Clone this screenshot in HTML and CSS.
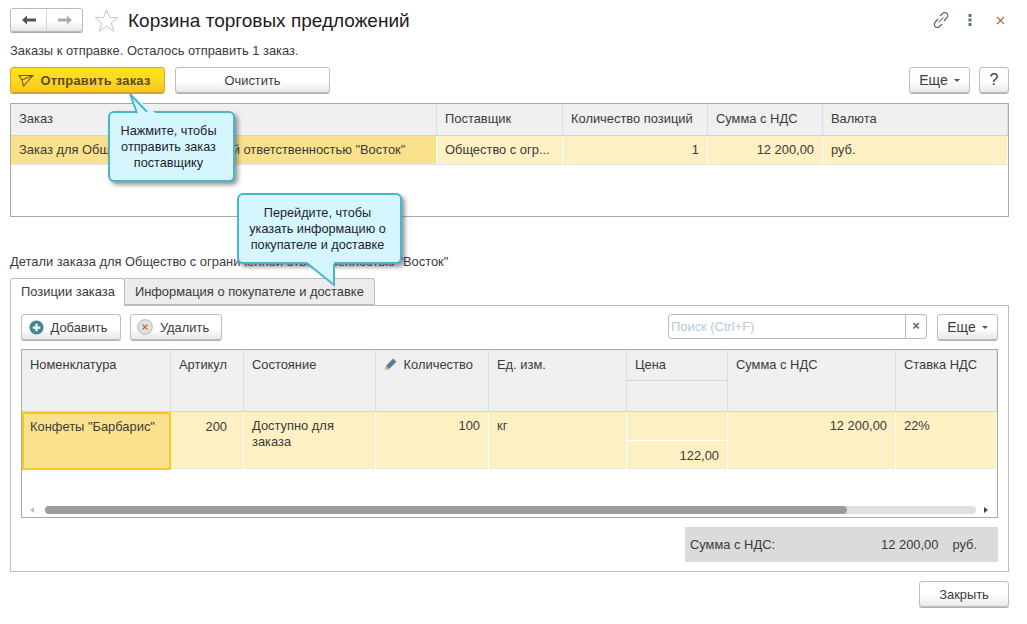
FILE: index.html
```html
<!DOCTYPE html>
<html lang="ru">
<head>
    <meta charset="UTF-8">
    <meta name="viewport" content="width=device-width, initial-scale=1.0">
    <link rel="stylesheet" href="styles.css">
    <title>Корзина торговых предложений</title>
</head>
<body>
    <!-- Form header -->
    <div class="form-header">
        <div class="nav-buttons">
            <span class="nav-button">
                <svg width="16" height="12" viewBox="0 0 16 12"><path d="M1 6l5-4.500v3h9v3H6v3z" fill="#555"/></svg>
            </span>
            <span class="nav-button">
                <svg width="16" height="12" viewBox="0 0 16 12"><path d="M15 6l-5-4.500v3H1v3h9v3z" fill="#aaa"/></svg>
            </span>
        </div>
        <svg class="star" width="25" height="25" viewBox="0 0 25 25"><path d="M12.500 1.500l3 8h8.500l-6.800 5.300 2.500 8.500-7.200-5-7.200 5 2.500-8.500L1 9.500h8.500z" fill="#fff" stroke="#c4c8c8"/></svg>
        <h1 class="form-title">Корзина торговых предложений</h1>
        <div class="window-icons">
            <svg class="icon-link" width="16" height="16" viewBox="0 0 16 16" fill="none" stroke="#4a6f8a" stroke-width="1.200"><path d="M7 4l2.500-2.500a2.800 2.800 0 0 1 4.500 4L11 9"/><path d="M9 12l-2.500 2.500a2.800 2.800 0 0 1-4.500-4L5 7"/><path d="M5.500 10.500l5-5" stroke="#c08a50"/></svg>
            <svg class="icon-dots" width="4" height="12" viewBox="0 0 4 12" fill="#5a7488"><rect x="0.500" y="0" width="3" height="3"/><rect x="0.500" y="4.500" width="3" height="3"/><rect x="0.500" y="9" width="3" height="3"/></svg>
            <svg class="icon-close" width="9" height="9" viewBox="0 0 9 9" stroke="#b5673f" stroke-width="1.100"><path d="M1 1l7 7M8 1l-7 7"/></svg>
        </div>
    </div>

    <p class="info-line">Заказы к отправке. Осталось отправить 1 заказ.</p>

    <!-- Main command bar -->
    <div class="command-bar">
        <button class="btn btn-send">
            <svg width="16" height="13" viewBox="0 0 16 13" fill="none" stroke="#7a5a10" stroke-width="1.100"><path d="M1 1.500h14L5.500 12 4 6zM4 6l11-4.500"/></svg>
            Отправить заказ
        </button>
        <button class="btn btn-clear">Очистить</button>
        <span class="spacer"></span>
        <button class="btn btn-more">Еще <i class="caret"></i></button>
        <button class="btn btn-help">?</button>
    </div>

    <!-- Orders table -->
    <div class="orders-table">
        <div class="orders-row orders-head">
            <div class="cell">Заказ</div>
            <div class="cell">Поставщик</div>
            <div class="cell">Количество позиций</div>
            <div class="cell">Сумма с НДС</div>
            <div class="cell">Валюта</div>
        </div>
        <div class="orders-row orders-body">
            <div class="cell cell-current">Заказ для Общество с ограниченной ответственностью "Восток"</div>
            <div class="cell">Общество с огр...</div>
            <div class="cell right">1</div>
            <div class="cell right">12 200,00</div>
            <div class="cell">руб.</div>
        </div>
    </div>

    <p class="details-line">Детали заказа для Общество с ограниченной ответственностью "Восток"</p>

    <!-- Tabs -->
    <div class="tabs">
        <div class="tab tab-active">Позиции заказа</div>
        <div class="tab">Информация о покупателе и доставке</div>
    </div>

    <div class="tab-panel">
        <div class="panel-toolbar">
            <button class="btn btn-add">
                <svg width="15" height="15" viewBox="0 0 16 16"><circle cx="8" cy="8" r="7.500" fill="#3d8a96"/><path d="M4 8h8M8 4v8" stroke="#fff" stroke-width="2.400"/></svg>
                Добавить
            </button>
            <button class="btn btn-delete">
                <svg width="16" height="16" viewBox="0 0 16 16"><circle cx="8" cy="8" r="7.300" fill="#e2e2e2" stroke="#b5b5b5"/><path d="M5.500 5.500l5 5M10.500 5.500l-5 5" stroke="#b86a4a" stroke-width="1.200"/></svg>
                Удалить
            </button>
            <span class="spacer"></span>
            <div class="search-box">
                <span class="search-text">Поиск (Ctrl+F)</span>
                <span class="search-clear">×</span>
            </div>
            <button class="btn btn-more">Еще <i class="caret"></i></button>
        </div>

        <!-- Order lines -->
        <div class="lines-table">
            <div class="lines-row lines-head">
                <div class="cell">Номенклатура</div>
                <div class="cell">Артикул</div>
                <div class="cell">Состояние</div>
                <div class="cell">
                    <svg class="pencil" width="14" height="14" viewBox="0 0 14 14"><path d="M1 13l1-4 7-7.500 3.500 3.200L5 12z" fill="#5d7f96"/><path d="M1 13l1-4 3 3z" fill="#e8c27a"/></svg>
                    Количество
                </div>
                <div class="cell">Ед. изм.</div>
                <div class="cell-stack">
                    <div class="cell cell-top">Цена</div>
                    <div class="cell cell-bottom"></div>
                </div>
                <div class="cell">Сумма с НДС</div>
                <div class="cell">Ставка НДС</div>
            </div>
            <div class="lines-row lines-body">
                <div class="cell cell-focus">Конфеты "Барбарис"</div>
                <div class="cell right cell-article">200</div>
                <div class="cell">Доступно для заказа</div>
                <div class="cell right">100</div>
                <div class="cell">кг</div>
                <div class="cell-stack">
                    <div class="cell cell-top"></div>
                    <div class="cell cell-bottom right">122,00</div>
                </div>
                <div class="cell right">12 200,00</div>
                <div class="cell">22%</div>
            </div>
            <div class="scroll-row">
                <i class="arrow-left"></i>
                <div class="scroll-track"><div class="scroll-thumb"></div></div>
                <i class="arrow-right"></i>
            </div>
        </div>

        <div class="summary-wrap">
            <div class="summary">
                <span class="summary-label">Сумма с НДС:</span>
                <span class="summary-value">12 200,00</span>
                <span class="summary-currency">руб.</span>
            </div>
        </div>
    </div>

    <div class="form-footer">
        <button class="btn btn-close">Закрыть</button>
    </div>

    <!-- Callouts -->
    <div class="callout callout-send">
        <svg class="callout-tail tail-send" width="32" height="22" viewBox="0 0 32 22"><path d="M3 1l7 20h20z" fill="#d6f6fd"/><path d="M10 20L3 1l17 18" fill="none" stroke="#4cb4cf" stroke-width="2"/></svg>
        Нажмите, чтобы отправить заказ поставщику
    </div>
    <div class="callout callout-tab">
        <svg class="callout-tail tail-tab" width="32" height="26" viewBox="0 0 32 26"><path d="M2 0l27 24V0z" fill="#d6f6fd"/><path d="M3 2l26 21V2" fill="none" stroke="#4cb4cf" stroke-width="2"/></svg>
        Перейдите, чтобы указать информацию о покупателе и доставке
    </div>
</body>
</html>
```

FILE: styles.css
```css
/* Page */
body {
    margin: 0;
    padding: 8px 18px 0 10px;
    font-family: "Liberation Sans", Arial, sans-serif;
    font-size: 12.9px;
    color: #3d3a3a;
    background-color: #fff;
    position: relative;
    height: 616px;
    box-sizing: border-box;
    overflow: hidden;
}

p {
    margin: 0;
}

/* Form header */
.form-header {
    display: flex;
    align-items: center;
    height: 24px;
}

.nav-buttons {
    display: flex;
    width: 73px;
    height: 24px;
    box-sizing: border-box;
    border: 1px solid #b9b9b9;
    border-radius: 3px;
    background: linear-gradient(#fff 55%, #e6e6e6);
    box-shadow: 0 1px 0 #aaa;
}

.nav-button {
    flex: 1;
    display: flex;
    align-items: center;
    justify-content: center;
}

.nav-button + .nav-button {
    border-left: 1px solid #d4d4d4;
}

.star {
    margin-left: 11px;
}

.form-title {
    margin: 2px 0 0 9px;
    font-size: 19px;
    font-weight: normal;
    color: #1f1a1f;
}

.window-icons {
    margin-left: auto;
    margin-right: 4px;
    display: flex;
    align-items: center;
}

.icon-dots {
    margin-left: 19px;
}

.icon-close {
    margin-left: 24px;
}

.info-line {
    margin-top: 11px;
    line-height: 15px;
}

/* Buttons */
.command-bar {
    display: flex;
    margin-top: 9px;
    height: 26px;
}

.spacer {
    flex: 1;
}

.btn {
    height: 26px;
    box-sizing: border-box;
    padding: 0;
    display: flex;
    align-items: center;
    justify-content: center;
    border: 1px solid #bdbdbd;
    border-radius: 3px;
    background: linear-gradient(#fff 55%, #e8e8e8);
    box-shadow: 0 1px 0 #b0b0b0;
    font-family: inherit;
    font-size: 12.9px;
    color: #3d3a3a;
}

.btn-send {
    width: 155px;
    padding-right: 6px;
    gap: 6px;
    font-weight: bold;
    letter-spacing: 0.25px;
    color: #5c4a20;
    border-color: #d3a630;
    background: linear-gradient(#ffe31f, #fdd520 60%, #f5c61a);
    box-shadow: 0 1px 0 #c9a13a;
}

.btn-clear {
    width: 155px;
    margin-left: 10px;
}

.btn-more {
    width: 61px;
    gap: 6px;
    font-size: 14px;
}

.btn-help {
    width: 30px;
    margin-left: 9px;
    font-size: 16px;
}

.caret {
    width: 0;
    height: 0;
    border-left: 3px solid transparent;
    border-right: 3px solid transparent;
    border-top: 3px solid #555;
}

/* Shared cells */
.cell {
    padding: 6px 8px;
    line-height: 16px;
    box-sizing: border-box;
    min-width: 0;
}

.right {
    text-align: right;
}

/* Orders table */
.orders-table {
    margin-top: 10px;
    height: 114px;
    box-sizing: border-box;
    border: 1px solid #a9a9a9;
}

.orders-row {
    display: grid;
    grid-template-columns: 426px 126px 145px 115px 1fr;
}

.orders-head {
    height: 32px;
    background-color: #f0f0f0;
    border-bottom: 1px solid #c5d8df;
    box-sizing: border-box;
}

.orders-head .cell {
    border-right: 1px solid #d4e2e8;
    padding-top: 7px;
}

.orders-body {
    height: 28px;
    background-color: #fdf1c3;
    border-bottom: 1px solid #e2e6e8;
    box-sizing: content-box;
}

.orders-body .cell {
    padding-top: 6px;
    border-right: 1px solid #fff;
    white-space: nowrap;
    overflow: hidden;
}

.orders-body .cell-current {
    background-color: #fae28c;
}

/* Details */
.details-line {
    margin-top: 37px;
    line-height: 15px;
}

/* Tabs */
.tabs {
    display: flex;
    margin-top: 9px;
    height: 28px;
    position: relative;
    z-index: 1;
}

.tab {
    box-sizing: border-box;
    height: 27px;
    padding: 5px 10px 0;
    line-height: 16px;
    border: 1px solid #bdbdbd;
    border-left: none;
    border-radius: 0 3px 0 0;
    background-color: #ececec;
}

.tab-active {
    height: 28px;
    padding: 5px 9px 0 10px;
    border-left: 1px solid #bdbdbd;
    border-bottom: none;
    border-radius: 3px 3px 0 0;
    background-color: #fff;
}

.tab-panel {
    margin-top: -1px;
    height: 267px;
    box-sizing: border-box;
    border: 1px solid #bdbdbd;
    padding: 8px 10px 0;
}

.panel-toolbar {
    display: flex;
    height: 26px;
}

.btn-add {
    width: 100px;
    padding-right: 6px;
    gap: 7px;
}

.btn-delete {
    width: 92px;
    margin-left: 9px;
    padding-right: 6px;
    gap: 7px;
}

.search-box {
    width: 259px;
    height: 25px;
    margin-right: 10px;
    box-sizing: border-box;
    border: 1px solid #bbb;
    border-radius: 3px;
    display: flex;
    align-items: center;
}

.search-text {
    flex: 1;
    padding-left: 2px;
    color: #b7cbd6;
}

.search-clear {
    width: 20px;
    height: 23px;
    line-height: 22px;
    text-align: center;
    border-left: 1px solid #bbb;
    color: #4a6f8a;
    font-weight: bold;
}

/* Order lines table */
.lines-table {
    margin-top: 9px;
    height: 169px;
    box-sizing: border-box;
    border: 1px solid #a9a9a9;
    display: flex;
    flex-direction: column;
}

.lines-row {
    display: grid;
    grid-template-columns: 149px 73px 132px 113px 138px 101px 168px 1fr;
}

.lines-head {
    height: 61px;
    background-color: #f0f0f0;
    border-bottom: 1px solid #c5d8df;
    box-sizing: content-box;
}

.lines-head .cell {
    border-right: 1px solid #d4e2e8;
    padding-top: 7px;
}

.pencil {
    vertical-align: -2px;
    margin-right: 2px;
}

.cell-stack {
    display: flex;
    flex-direction: column;
    min-width: 0;
}

.cell-stack .cell {
    height: 50%;
}

.lines-head .cell-top {
    height: 31px;
    border-bottom: 1px solid #c5d8df;
}

.lines-head .cell-bottom {
    flex: 1;
}

.lines-body {
    height: 56px;
    background-color: #fdf1c3;
    border-bottom: 1px solid #e6e8ea;
    box-sizing: content-box;
}

.lines-body .cell {
    border-right: 1px solid #fff;
    padding-top: 6px;
}

.lines-body .cell-focus {
    background-color: #fae28c;
    border: 2px solid #f7c926;
    padding: 5px 6px;
}

.lines-body .cell-article {
    padding-right: 16px;
    padding-top: 7px;
}

.lines-body .cell-top {
    height: 29px;
    border-bottom: 1px solid #fff;
}

.lines-body .cell-bottom {
    flex: 1;
    padding-top: 7px;
}

/* Scroll bar */
.scroll-row {
    margin-top: auto;
    margin-bottom: 3px;
    height: 8px;
    display: flex;
    align-items: center;
    padding: 0 9px 0 8px;
}

.scroll-track {
    flex: 1;
    height: 8px;
    margin: 0 8px 0 11px;
    border-radius: 4px;
    background-color: #dfe1e1;
}

.scroll-thumb {
    width: 802px;
    height: 8px;
    border-radius: 4px;
    background-color: #9c9c9c;
}

.arrow-left {
    border-top: 3px solid transparent;
    border-bottom: 3px solid transparent;
    border-right: 4px solid #b5c2c8;
}

.arrow-right {
    border-top: 3px solid transparent;
    border-bottom: 3px solid transparent;
    border-left: 4px solid #444;
}

/* Summary */
.summary-wrap {
    display: flex;
    justify-content: flex-end;
    margin-top: 9px;
}

.summary {
    width: 313px;
    height: 35px;
    box-sizing: border-box;
    padding: 0 21px 0 5px;
    display: flex;
    align-items: center;
    background-color: #dbdbdb;
}

.summary-label {
    flex: 1;
}

.summary-currency {
    margin-left: 14px;
}

/* Footer */
.form-footer {
    display: flex;
    justify-content: flex-end;
    margin-top: 9px;
}

.btn-close {
    width: 90px;
}

/* Callouts */
.callout {
    position: absolute;
    z-index: 5;
    box-sizing: border-box;
    height: 71px;
    display: flex;
    align-items: center;
    justify-content: center;
    text-align: center;
    font-size: 12.7px;
    line-height: 16px;
    color: #1d1d2b;
    background-color: #d6f6fd;
    border: 2px solid #4cb4cf;
    border-radius: 6px;
    box-shadow: 3px 3px 4px rgba(60, 70, 70, 0.55);
}

.callout-send {
    left: 108px;
    top: 111px;
    width: 127px;
    padding: 0 13px 0 7px;
}

.callout-tab {
    left: 237px;
    top: 193px;
    width: 165px;
    padding: 0 10px 0 6px;
}

.callout-tail {
    position: absolute;
    overflow: visible;
}

.tail-send {
    left: 17px;
    top: -20px;
}

.tail-tab {
    left: 66px;
    top: 67px;
}
```
